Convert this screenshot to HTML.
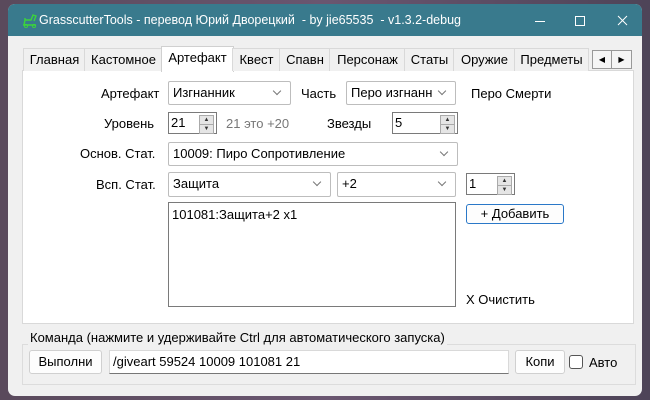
<!DOCTYPE html><html><head><meta charset="utf-8"><style>
body{margin:0;width:650px;height:400px;background:linear-gradient(90deg,#5a4a5c,#6a5670 50%,#4e4458);position:relative;overflow:hidden;font-family:"Liberation Sans",sans-serif;font-size:13px;color:#000}
.a{position:absolute}
#win{left:8px;top:4px;width:634px;height:392px;background:#f0f0f0;border-radius:7px;overflow:hidden}
#tb{left:0;top:0;width:634px;height:32px;background:#397a8d;color:#fff;font-size:12.5px}
.tab{top:45px;height:22px;line-height:22px;border:1px solid #d9d9d9;border-bottom:none;background:#f0f0f0;text-align:center;font-size:13px}
.cb{background:#fff;border:1px solid #bdbdbd;border-radius:2px;height:22px;line-height:22px;padding-left:4px;box-sizing:border-box}
.cb:after{content:"";position:absolute;right:10px;top:6px;width:5px;height:5px;border-right:1px solid #777;border-bottom:1px solid #777;transform:rotate(45deg)}
.sp{background:#fff;border:1px solid #7a7a7a;height:22px;line-height:20px;padding-left:2px;box-sizing:border-box}
.sp i{position:absolute;right:2px;width:13px;height:8px;background:#e5e5e5;border:1px solid #aaa;font-style:normal;font-size:6px;line-height:8px;text-align:center;color:#333}
.btn{background:#fdfdfd;border:1px solid #d0d0d0;border-radius:3px;text-align:center;box-sizing:border-box}
</style></head><body>
<div id="win" class="a">
<div id="tb" class="a"><svg class="a" style="left:13px;top:10px" width="18" height="14"><path d="M2 11h13M3 11l1-5h6l2-5 3 1-2 5M4 6v-2" stroke="#3bd43b" fill="none" stroke-width="1.4"/><circle cx="5" cy="12" r="1.6" fill="none" stroke="#3bd43b"/><circle cx="13" cy="12" r="1.6" fill="none" stroke="#3bd43b"/></svg>
<span class="a" style="left:31px;top:9px">GrasscutterTools - перевод Юрий Дворецкий &nbsp;- by jie65535 &nbsp;- v1.3.2-debug</span>
<svg class="a" style="left:510px;top:8px" width="120" height="18"><path d="M17 9.5h10" stroke="#fff" stroke-width="1"/><rect x="57.5" y="4.5" width="9" height="9" fill="none" stroke="#fff"/><path d="M100 4l9 9M109 4l-9 9" stroke="#fff" stroke-width="1"/></svg></div>
</div>
<div class="a" style="left:22px;top:70px;width:610px;height:252px;background:#fff;border:1px solid #d9d9d9"></div>
<div class="a tab" style="left:23px;top:48px;width:61px">Главная</div>
<div class="a tab" style="left:84px;top:48px;width:77px">Кастомное</div>
<div class="a tab" style="left:161px;top:46px;width:71px;height:25px;background:#fff;border-color:#d0d0d0">Артефакт</div>
<div class="a tab" style="left:232px;top:48px;width:47px">Квест</div>
<div class="a tab" style="left:279px;top:48px;width:50px">Спавн</div>
<div class="a tab" style="left:329px;top:48px;width:75px">Персонаж</div>
<div class="a tab" style="left:404px;top:48px;width:49px">Статы</div>
<div class="a tab" style="left:453px;top:48px;width:61px">Оружие</div>
<div class="a tab" style="left:514px;top:48px;width:73px">Предметы</div>
<div class="a" style="left:592px;top:50px;width:18px;height:17px;border:1px solid #999;background:#f5f5f5;font-size:8px;text-align:center;line-height:17px">◀</div>
<div class="a" style="left:611px;top:50px;width:19px;height:17px;border:1px solid #999;background:#f5f5f5;font-size:8px;text-align:center;line-height:17px">▶</div>

<span class="a" style="left:101px;top:86px">Артефакт</span>
<div class="a cb" style="left:168px;top:81px;width:123px;height:24px;line-height:22px">Изгнанник</div>
<span class="a" style="left:301px;top:86px">Часть</span>
<div class="a cb" style="left:346px;top:81px;width:110px;height:24px;line-height:22px">Перо изгнанн</div>
<span class="a" style="left:471px;top:86px">Перо Смерти</span>

<span class="a" style="left:104px;top:116px">Уровень</span>
<div class="a sp" style="left:168px;top:112px;width:49px">21<i style="top:2px">▲</i><i style="top:11px">▼</i></div>
<span class="a" style="left:226px;top:116px;color:#777">21 это +20</span>
<span class="a" style="left:327px;top:116px">Звезды</span>
<div class="a sp" style="left:392px;top:112px;width:66px">5<i style="top:2px">▲</i><i style="top:11px">▼</i></div>

<span class="a" style="left:80px;top:146px">Основ. Стат.</span>
<div class="a cb" style="left:168px;top:142px;width:290px;height:24px">10009: Пиро Сопротивление</div>

<span class="a" style="left:96px;top:177px">Всп. Стат.</span>
<div class="a cb" style="left:168px;top:172px;width:163px;height:25px">Защита</div>
<div class="a cb" style="left:337px;top:172px;width:119px;height:25px">+2</div>
<div class="a sp" style="left:466px;top:173px;width:49px">1<i style="top:2px">▲</i><i style="top:11px">▼</i></div>

<div class="a" style="left:168px;top:202px;width:288px;height:105px;background:#fff;border:1px solid #7a7a7a;box-sizing:border-box;padding:4px 3px">101081:Защита+2 x1</div>
<div class="a btn" style="left:466px;top:204px;width:98px;height:20px;line-height:18px;border-color:#2a78c8">+ Добавить</div>
<span class="a" style="left:466px;top:292px">X Очистить</span>

<div class="a" style="left:22px;top:344px;width:612px;height:39px;border:1px solid #dcdcdc"></div>
<span class="a" style="left:28px;top:330px;background:#f0f0f0;padding:0 2px">Команда (нажмите и удерживайте Ctrl для автоматического запуска)</span>
<div class="a btn" style="left:29px;top:350px;width:73px;height:24px;line-height:22px">Выполни</div>
<div class="a" style="left:109px;top:350px;width:400px;height:24px;background:#fff;border:1px solid #d9d9d9;border-bottom:1px solid #777;box-sizing:border-box;line-height:22px;padding-left:3px">/giveart 59524 10009 101081 21</div>
<div class="a btn" style="left:515px;top:350px;width:50px;height:24px;line-height:22px">Копи</div>
<div class="a" style="left:569px;top:355px;width:12px;height:12px;border:1px solid #555;border-radius:3px;background:#fff"></div>
<span class="a" style="left:589px;top:355px">Авто</span>
</body></html>
